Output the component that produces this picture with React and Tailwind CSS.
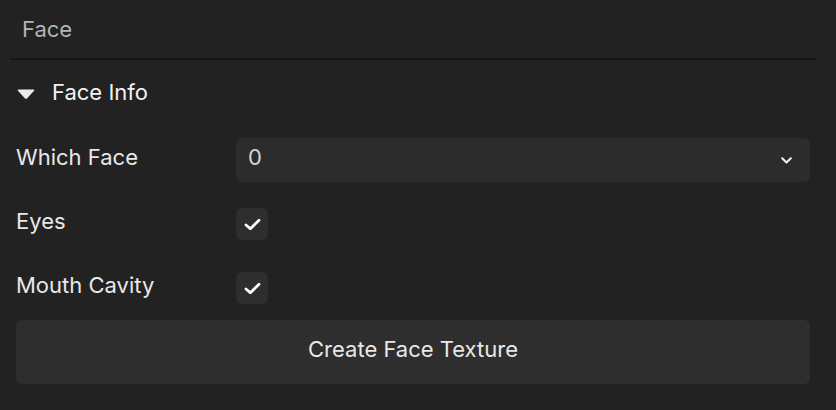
import React from "react";

function Check() {
  return (
    <svg width="17" height="13" viewBox="0 0 17 13" fill="none">
      <path d="M2 7 L6.3 10.8 L15 2.2" stroke="#ffffff" strokeWidth="2.8" strokeLinecap="round" strokeLinejoin="round" />
    </svg>
  );
}

function Checkbox() {
  return (
    <div className="w-[32px] h-[32px] rounded-[6px] bg-[#2e2e2e] flex items-center justify-center">
      <Check />
    </div>
  );
}

export default function App() {
  return (
    <div
      className="w-[836px] h-[410px] bg-[#222222] overflow-hidden"
      style={{ fontFamily: "Inter, 'Noto Sans', sans-serif" }}
    >
      <div className="h-[58px] flex items-center pl-[22px] text-[22px] text-[#b4b4b4]">Face</div>
      <div className="ml-[10px] mr-[20px] h-[2px] bg-[#171717]" />
      <div className="pl-[16px] pr-[26px]">
        <div className="h-[68px] flex items-center">
          <svg width="18" height="10" viewBox="0 0 18 10" className="ml-[1px]">
            <path d="M1.5 0.5 H16.5 Q18 0.5 17 1.8 L10.2 9.2 Q9 10.4 7.8 9.2 L1 1.8 Q0 0.5 1.5 0.5 Z" fill="#ececec" />
          </svg>
          <span className="ml-[17px] pb-[4px] text-[22px] text-[#f2f2f2]">Face Info</span>
        </div>
        <div className="h-[64px] flex items-center">
          <div className="w-[220px] pb-[6px] text-[22px] text-[#e8e8e8]">Which Face</div>
          <div className="flex-1 h-[44px] rounded-[6px] bg-[#2c2c2c] flex items-center justify-between pl-[12px] pr-[18px]">
            <span className="pb-[6px] text-[22px] text-[#d4d4d4]">0</span>
            <svg width="11" height="7" viewBox="0 0 11 7" fill="none">
              <path d="M1.2 1.2 L5.5 5.5 L9.8 1.2" stroke="#f2f2f2" strokeWidth="2" strokeLinecap="round" strokeLinejoin="round" />
            </svg>
          </div>
        </div>
        <div className="h-[64px] flex items-center">
          <div className="w-[220px] pb-[6px] text-[22px] text-[#e8e8e8]">Eyes</div>
          <Checkbox />
        </div>
        <div className="h-[64px] flex items-center">
          <div className="w-[220px] pb-[6px] text-[22px] text-[#e8e8e8]">Mouth Cavity</div>
          <Checkbox />
        </div>
        <div className="h-[64px] rounded-[6px] bg-[#2e2e2e] flex items-center justify-center pb-[6px] text-[22px] text-[#e8e8e8]">
          Create Face Texture
        </div>
      </div>
    </div>
  );
}
